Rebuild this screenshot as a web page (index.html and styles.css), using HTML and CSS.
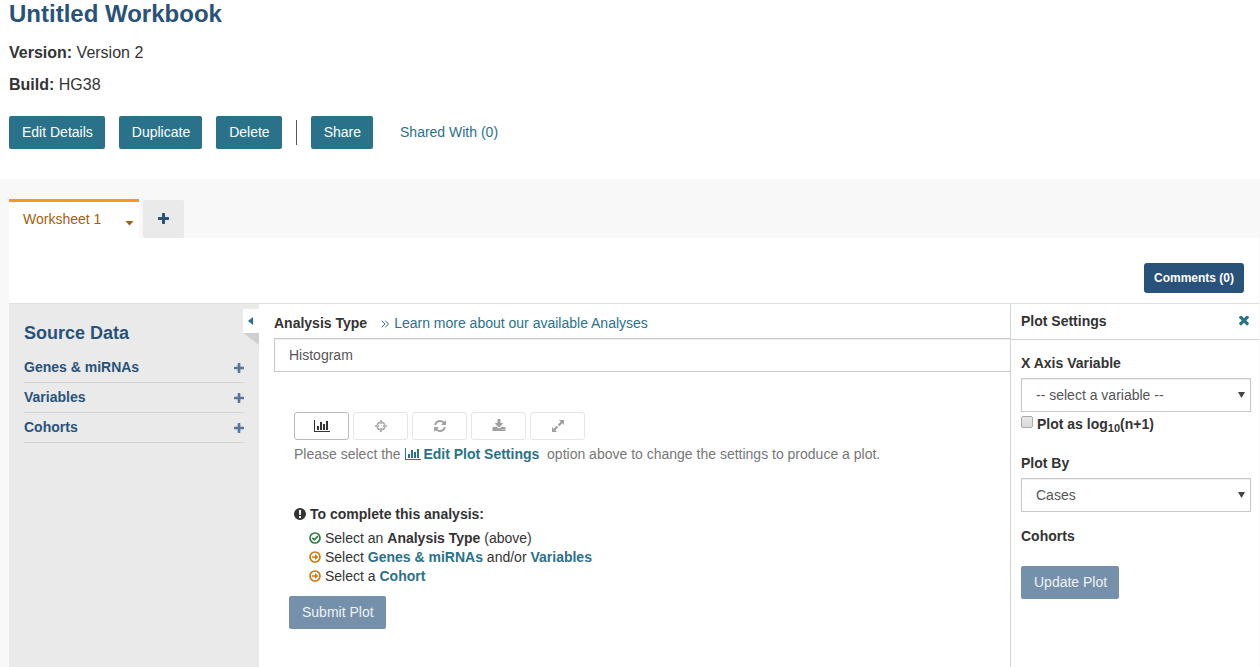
FILE: index.html
```html
<!DOCTYPE html>
<html lang="en">
<head>
<meta charset="utf-8">
<title>Untitled Workbook</title>
<link rel="stylesheet" href="styles.css">
</head>
<body>
<svg class="defs" aria-hidden="true">
  <symbol id="chart" viewBox="0 0 2048 1792"><path d="M640 896v512h-256v-512h256zm384-512v1024h-256v-1024h256zm1024 1152v128h-2048v-1536h128v1408h1920zm-640-896v768h-256v-768h256zm384-384v1152h-256v-1152h256z"/></symbol>
  <symbol id="plus" viewBox="192 128 1408 1408"><path d="M1600 736v192q0 40-28 68t-68 28h-416v416q0 40-28 68t-68 28h-192q-40 0-68-28t-28-68v-416h-416q-40 0-68-28t-28-68v-192q0-40 28-68t68-28h416v-416q0-40 28-68t68-28h192q40 0 68 28t28 68v416h416q40 0 68 28t28 68z"/></symbol>
  <symbol id="refresh" viewBox="0 0 1792 1792"><path d="M1639 1056q0 5-1 7-64 268-268 434.5t-478 166.5q-146 0-282.5-55t-243.5-157l-129 129q-19 19-45 19t-45-19-19-45v-448q0-26 19-45t45-19h448q26 0 45 19t19 45-19 45l-137 137q71 66 161 102t187 36q134 0 250-65t186-179q11-17 53-117 8-23 30-23h192q13 0 22.5 9.5t9.5 22.5zm25-800v448q0 26-19 45t-45 19h-448q-26 0-45-19t-19-45 19-45l138-138q-148-137-349-137-134 0-250 65t-186 179q-11 17-53 117-8 23-30 23h-199q-13 0-22.5-9.5t-9.5-22.5v-7q65-268 270-434.5t480-166.5q146 0 284 55.5t245 156.5l130-129q19-19 45-19t45 19 19 45z"/></symbol>
  <symbol id="download" viewBox="0 0 1792 1792"><path d="M1344 1344q0-26-19-45t-45-19-45 19-19 45 19 45 45 19 45-19 19-45zm256 0q0-26-19-45t-45-19-45 19-19 45 19 45 45 19 45-19 19-45zm128-224v320q0 40-28 68t-68 28h-1472q-40 0-68-28t-28-68v-320q0-40 28-68t68-28h465l135 136q58 56 136 56t136-56l136-136h464q40 0 68 28t28 68zm-325-569q17 41-14 70l-448 448q-18 19-45 19t-45-19l-448-448q-31-29-14-70 17-39 59-39h256v-448q0-26 19-45t45-19h256q26 0 45 19t19 45v448h256q42 0 59 39z"/></symbol>
  <symbol id="times" viewBox="302 430 1188 1188"><path d="M1490 1322q0 40-28 68l-136 136q-28 28-68 28t-68-28l-294-294-294 294q-28 28-68 28t-68-28l-136-136q-28-28-28-68t28-68l294-294-294-294q-28-28-28-68t28-68l136-136q28-28 68-28t68 28l294 294 294-294q28-28 68-28t68 28l136 136q28 28 28 68t-28 68l-294 294 294 294q28 28 28 68z"/></symbol>
  <symbol id="target" viewBox="0 0 12 12"><path fill="none" stroke="currentColor" stroke-width="1.600" d="M6 0v4M6 8v4M0 6h4M8 6h4M4.800 2.200A4 4 0 0 0 2.200 4.800M7.200 2.200A4 4 0 0 1 9.800 4.800M4.800 9.800A4 4 0 0 1 2.200 7.200M7.200 9.800A4 4 0 0 0 9.800 7.200"/></symbol>
  <symbol id="expand" viewBox="0 0 14 14"><path d="M8 1h5v5l-1.700-1.700-3 3-1.600-1.600 3-3zM6 13H1V8l1.700 1.700 3-3 1.600 1.600-3 3z"/></symbol>
  <symbol id="alert" viewBox="0 0 12 12"><path fill-rule="evenodd" d="M6 0a6 6 0 1 1 0 12A6 6 0 0 1 6 0zM4.900 2l.3 5h1.600l.3-5zM5 8v2h2V8z"/></symbol>
  <symbol id="done" viewBox="0 0 12 12"><circle cx="6" cy="6" r="5" fill="none" stroke="currentColor" stroke-width="1.700"/><path fill="none" stroke="currentColor" stroke-width="1.700" d="M3.300 5.800l2 2 3.600-3.600"/></symbol>
  <symbol id="todo" viewBox="0 0 12 12"><circle cx="6" cy="6" r="5" fill="none" stroke="currentColor" stroke-width="1.700"/><path d="M2.800 5.200H6V3l3.300 3L6 9V6.800H2.800z"/></symbol>
</svg>

<header class="workbook">
  <h1>Untitled Workbook</h1>
  <p><strong>Version:</strong> Version 2</p>
  <p><strong>Build:</strong> HG38</p>
  <div class="actions">
    <button class="btn" type="button">Edit Details</button>
    <button class="btn" type="button">Duplicate</button>
    <button class="btn" type="button">Delete</button>
    <span class="divider"></span>
    <button class="btn" type="button">Share</button>
    <a class="shared" href="#">Shared With (0)</a>
  </div>
</header>

<main class="workspace">
  <nav class="tabs">
    <div class="tab"><a href="#">Worksheet 1</a><button class="caret" type="button" aria-label="Worksheet menu"></button></div>
    <button class="add-tab" type="button" aria-label="Add worksheet"><svg class="icon-m"><use href="#plus"/></svg></button>
  </nav>
  <div class="sheet">
    <div class="sheet-bar"><button class="comments" type="button">Comments (0)</button></div>
    <div class="columns">
      <aside class="source">
        <button class="collapse" type="button" aria-label="Collapse source data"></button>
        <h2>Source Data</h2>
        <ul>
          <li><span>Genes &amp; miRNAs</span><button type="button" aria-label="Add genes"><svg class="icon-s"><use href="#plus"/></svg></button></li>
          <li><span>Variables</span><button type="button" aria-label="Add variables"><svg class="icon-s"><use href="#plus"/></svg></button></li>
          <li><span>Cohorts</span><button type="button" aria-label="Add cohorts"><svg class="icon-s"><use href="#plus"/></svg></button></li>
        </ul>
      </aside>

      <section class="analysis">
        <div class="type-row"><label for="analysis">Analysis Type</label><a href="#"><svg class="chevrons" viewBox="0 0 8 8"><path d="M.7.7L4 4 .7 7.300M4.200.7L7.500 4 4.200 7.300"/></svg>Learn more about our available Analyses</a></div>
        <select id="analysis" class="field open-end"><option>Histogram</option></select>
        <div class="toolbar">
          <button class="tool current" type="button" aria-label="Edit plot settings"><svg class="icon-chart"><use href="#chart"/></svg></button>
          <button class="tool" type="button" aria-label="Select"><svg class="icon-t"><use href="#target"/></svg></button>
          <button class="tool" type="button" aria-label="Redraw"><svg class="icon-l"><use href="#refresh"/></svg></button>
          <button class="tool" type="button" aria-label="Download"><svg class="icon-l"><use href="#download"/></svg></button>
          <button class="tool" type="button" aria-label="Full screen"><svg class="icon-l"><use href="#expand"/></svg></button>
        </div>
        <p class="hint">Please select the <a href="#"><svg class="icon-chart"><use href="#chart"/></svg> Edit Plot Settings</a>&nbsp; option above to change the settings to produce a plot.</p>
        <div class="todo">
          <h3><svg class="icon-step"><use href="#alert"/></svg>To complete this analysis:</h3>
          <ul>
            <li><svg class="icon-step green"><use href="#done"/></svg>Select an <strong>Analysis Type</strong> (above)</li>
            <li><svg class="icon-step orange"><use href="#todo"/></svg>Select <a href="#">Genes &amp; miRNAs</a> and/or <a href="#">Variables</a></li>
            <li><svg class="icon-step orange"><use href="#todo"/></svg>Select a <a href="#">Cohort</a></li>
          </ul>
        </div>
        <button class="btn muted" type="button">Submit Plot</button>
      </section>

      <aside class="settings">
        <div class="settings-head"><h3>Plot Settings</h3><button class="close" type="button" aria-label="Close settings"><svg class="icon-s"><use href="#times"/></svg></button></div>
        <form class="settings-body">
          <label for="x-axis">X Axis Variable</label>
          <div class="picker"><select id="x-axis" class="field"><option>-- select a variable --</option></select></div>
          <div class="check"><input id="log" type="checkbox"><label for="log">Plot as log<sub>10</sub>(n+1)</label></div>
          <label for="plot-by">Plot By</label>
          <div class="picker"><select id="plot-by" class="field"><option>Cases</option></select></div>
          <h4>Cohorts</h4>
          <button class="btn muted" type="button">Update Plot</button>
        </form>
      </aside>
    </div>
  </div>
</main>
</body>
</html>
```
FILE: styles.css
```css
* { box-sizing: border-box; }
html, body { min-height: 100%; }
body {
  margin: 0;
  min-height: 100vh;
  display: flex;
  flex-direction: column;
  overflow-x: hidden;
  background: #fff;
  color: #333;
  font: 14px/20px "Liberation Sans", Arial, sans-serif;
}
h1, h2, h3, h4, p, ul { margin: 0; padding: 0; }
ul { list-style: none; }
a { color: #2a7289; text-decoration: none; }
button, select, input { font: inherit; margin: 0; }
button { border: 0; padding: 0; background: none; cursor: pointer; }
svg { fill: currentColor; flex: none; }
.defs { display: none; }
.icon-m { width: 11px; height: 11px; }
.icon-s { width: 10px; height: 10px; }
.icon-t { width: 12px; height: 12px; }
.icon-l { width: 14px; height: 14px; }
.icon-chart { width: 16px; height: 14px; }
.icon-step { width: 12px; height: 12px; margin-right: 4px; }

.workbook { padding: 0 9px 30px; font-size: 16px; line-height: 22px; }
.workbook h1 { color: #29527a; font-size: 24px; line-height: 28px; margin-bottom: 14px; }
.workbook p { margin-bottom: 10px; }
.actions { display: flex; align-items: center; padding-top: 10px; font-size: 14px; }
.btn {
  height: 33px;
  padding: 0 12px 2px 13px;
  border-radius: 2px;
  background: #2a7289;
  color: #fff;
}
.actions .btn { margin-right: 14px; }
.divider { width: 1px; height: 25px; margin-right: 14px; background: #555; }
.shared { margin-left: 13px; padding-bottom: 2px; }
.muted { background: #7590aa; color: #eef2f6; }

.workspace {
  flex: 1;
  display: flex;
  flex-direction: column;
  padding: 20px 1px 0 9px;
  background: #f8f8f8;
}
.tabs { display: flex; align-items: flex-end; gap: 4px; }
.tab {
  display: flex;
  width: 130px;
  height: 39px;
  padding: 0 5px 2px 14px;
  justify-content: space-between;
  align-items: center;
  border-top: 3px solid #f7981d;
  background: #fff;
}
.tab a { color: #a35f0b; }
.caret {
  width: 9px;
  height: 5px;
  margin-top: 8px;
  background: #a35f0b;
  clip-path: polygon(0 0, 100% 0, 50% 100%);
}
.add-tab {
  display: flex;
  align-items: center;
  justify-content: center;
  width: 41px;
  height: 38px;
  padding-bottom: 1px;
  border-radius: 2px;
  background: #eaeaea;
  color: #29527a;
}
.sheet { flex: 1; display: flex; flex-direction: column; background: #fff; }
.sheet-bar { display: flex; justify-content: flex-end; padding: 25px 15px 10px; border-bottom: 1px solid #e1e1e1; }
.comments {
  height: 30px;
  padding: 0 10px;
  border-radius: 3px;
  background: #29527a;
  color: #fff;
  font-size: 12px;
  font-weight: bold;
}
.columns { flex: 1; display: grid; grid-template-columns: 250px minmax(0, 1fr) 249px; }

.source { position: relative; padding: 18px 15px; background: #eaeaea; color: #29527a; }
.source h2 { font-size: 18px; line-height: 22px; margin-bottom: 9px; }
.source li {
  display: flex;
  align-items: center;
  justify-content: space-between;
  height: 30px;
  padding-bottom: 2px;
  border-bottom: 1px solid #d3d3d3;
  font-weight: bold;
}
.source li button { display: flex; padding-top: 3px; color: #54779b; }
.collapse { position: absolute; top: 5px; right: 0; width: 16px; height: 24px; background: #fff; color: #2a7289; }
.collapse::before {
  content: "";
  display: block;
  width: 5px;
  height: 8px;
  margin-left: 5px;
  background: currentColor;
  clip-path: polygon(100% 0, 100% 100%, 0 50%);
}
.collapse::after {
  content: "";
  position: absolute;
  top: 100%;
  left: 0;
  width: 16px;
  height: 12px;
  background: #d0d0d0;
  clip-path: polygon(0 0, 100% 0, 100% 100%);
}

.analysis { padding: 9px 0 0 15px; }
.type-row { display: flex; gap: 14px; margin-bottom: 5px; }
.type-row label { font-weight: bold; }
.chevrons { width: 8px; height: 8px; margin-right: 5px; fill: none; stroke: currentColor; }
.field {
  display: block;
  width: 100%;
  height: 34px;
  padding: 0 14px;
  border: 1px solid #c8c8c8;
  border-radius: 0;
  background: #fff;
  box-shadow: inset 0 1px 1px #eee;
  color: #555;
  appearance: none;
}
.open-end { border-right: 0; }
.toolbar { display: flex; gap: 4px; margin: 40px 0 4px 20px; }
.tool {
  display: flex;
  align-items: center;
  justify-content: center;
  width: 55px;
  height: 28px;
  border: 1px solid #e5e5e5;
  border-radius: 3px;
  color: #a0a0a0;
}
.tool.current { border-color: #bbb; color: #333; }
.hint { margin-left: 20px; color: #777; }
.hint a, .todo a { font-weight: bold; }
.hint svg { vertical-align: -2px; margin-right: -1px; }
.todo { margin: 40px 0 10px 20px; }
.todo h3 { display: flex; align-items: center; font-size: 14px; margin-bottom: 5px; }
.todo ul { padding-left: 15px; line-height: 19px; }
.todo li svg { vertical-align: -1px; }
.green { color: #307a42; }
.orange { color: #d07813; }
.analysis .btn { margin-left: 15px; }

.settings { border-left: 1px solid #d3d3d3; }
.settings-head {
  display: flex;
  align-items: center;
  justify-content: space-between;
  height: 36px;
  padding: 0 10px 1px;
  border-bottom: 1px solid #d3d3d3;
}
.settings h3, .settings h4 { font-size: 14px; }
.close { display: flex; color: #2a7289; }
.settings-body { padding: 13px 8px 0 10px; }
.settings-body label { display: block; font-weight: bold; margin-bottom: 5px; }
.picker { position: relative; }
.picker::after {
  content: "";
  position: absolute;
  top: 14px;
  right: 6px;
  width: 7px;
  height: 6px;
  background: #444;
  clip-path: polygon(0 0, 100% 0, 50% 100%);
  pointer-events: none;
}
.check { display: flex; align-items: flex-start; gap: 4px; margin: 2px 0 19px; }
.check input {
  appearance: none;
  width: 12px;
  height: 12px;
  margin-top: 2px;
  border: 1px solid #aaa;
  border-radius: 2px;
  background: linear-gradient(#e8e8e8, #d8d8d8);
}
.settings-body .check label { margin: 0; }
sub { font-size: 11px; line-height: 0; vertical-align: -3px; }
.settings h4 { margin: 14px 0 20px; }
```
